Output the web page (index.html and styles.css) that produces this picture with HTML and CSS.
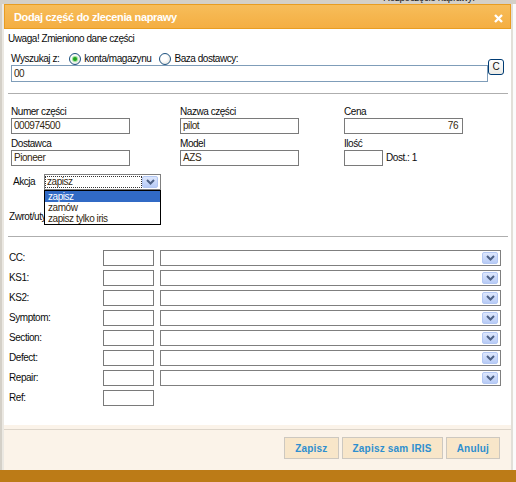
FILE: index.html
```html
<!DOCTYPE html>
<html lang="pl">
<head>
<meta charset="utf-8">
<title>Dodaj część do zlecenia naprawy</title>
<link rel="stylesheet" href="styles.css">
</head>
<body>
<div class="page">
  <div class="page-top"><span class="page-top-text">Rozpoczęcie naprawy:</span></div>
  <div class="page-fill"></div>
  <div class="page-bottom"></div>

  <div class="dialog">
    <div class="titlebar">
      <span class="title">Dodaj część do zlecenia naprawy</span>
      <svg class="close" width="9" height="9" viewBox="0 0 9 9"><path d="M1 1L8 8M8 1L1 8" stroke="#fff" stroke-width="2.4"/></svg>
    </div>

    <div class="body">
      <div class="notice">Uwaga! Zmieniono dane części</div>

      <div class="search">
        <div class="search-main">
          <div class="search-opts">
            <span>Wyszukaj z:</span>
            <span class="radio checked first"></span><span>konta/magazynu</span>
            <span class="radio second"></span><span>Baza dostawcy:</span>
          </div>
          <div class="field search-input">00</div>
        </div>
        <div class="cbtn">C</div>
      </div>

      <div class="rule"></div>

      <div class="grid">
        <div class="cell"><div class="lbl">Numer części</div><div class="field">000974500</div></div>
        <div class="cell"><div class="lbl">Nazwa części</div><div class="field">pilot</div></div>
        <div class="cell"><div class="lbl">Cena</div><div class="field num">76</div></div>
        <div class="cell"><div class="lbl">Dostawca</div><div class="field">Pioneer</div></div>
        <div class="cell"><div class="lbl">Model</div><div class="field">AZS</div></div>
        <div class="cell"><div class="lbl">Ilość</div><div class="qty-wrap"><div class="field qty"></div><span>Dost.: 1</span></div></div>
      </div>

      <div class="akcja-row">
        <span class="akcja-lbl">Akcja</span>
        <div class="select akcja">
          <span class="val focus">zapisz</span>
          <span class="arrow"><svg width="9" height="6" viewBox="0 0 9 6"><path d="M1 1L4.5 4.5L8 1" fill="none" stroke="#4d6185" stroke-width="2"/></svg></span>
          <div class="droplist">
            <div class="opt sel">zapisz</div>
            <div class="opt">zamów</div>
            <div class="opt">zapisz tylko iris</div>
          </div>
        </div>
      </div>

      <div class="zwrot-row"><span class="zwrot-lbl">Zwrot/utylizacja:</span></div>

      <div class="rule rule2"></div>

      <div class="codes">
        <div class="code-row"><span class="code-lbl">CC:</span><div class="field small"></div><div class="select wide"><span class="val"></span><span class="arrow"><svg width="9" height="6" viewBox="0 0 9 6"><path d="M1 1L4.5 4.5L8 1" fill="none" stroke="#4d6185" stroke-width="2"/></svg></span></div></div>
        <div class="code-row"><span class="code-lbl">KS1:</span><div class="field small"></div><div class="select wide"><span class="val"></span><span class="arrow"><svg width="9" height="6" viewBox="0 0 9 6"><path d="M1 1L4.5 4.5L8 1" fill="none" stroke="#4d6185" stroke-width="2"/></svg></span></div></div>
        <div class="code-row"><span class="code-lbl">KS2:</span><div class="field small"></div><div class="select wide"><span class="val"></span><span class="arrow"><svg width="9" height="6" viewBox="0 0 9 6"><path d="M1 1L4.5 4.5L8 1" fill="none" stroke="#4d6185" stroke-width="2"/></svg></span></div></div>
        <div class="code-row"><span class="code-lbl">Symptom:</span><div class="field small"></div><div class="select wide"><span class="val"></span><span class="arrow"><svg width="9" height="6" viewBox="0 0 9 6"><path d="M1 1L4.5 4.5L8 1" fill="none" stroke="#4d6185" stroke-width="2"/></svg></span></div></div>
        <div class="code-row"><span class="code-lbl">Section:</span><div class="field small"></div><div class="select wide"><span class="val"></span><span class="arrow"><svg width="9" height="6" viewBox="0 0 9 6"><path d="M1 1L4.5 4.5L8 1" fill="none" stroke="#4d6185" stroke-width="2"/></svg></span></div></div>
        <div class="code-row"><span class="code-lbl">Defect:</span><div class="field small"></div><div class="select wide"><span class="val"></span><span class="arrow"><svg width="9" height="6" viewBox="0 0 9 6"><path d="M1 1L4.5 4.5L8 1" fill="none" stroke="#4d6185" stroke-width="2"/></svg></span></div></div>
        <div class="code-row"><span class="code-lbl">Repair:</span><div class="field small"></div><div class="select wide"><span class="val"></span><span class="arrow"><svg width="9" height="6" viewBox="0 0 9 6"><path d="M1 1L4.5 4.5L8 1" fill="none" stroke="#4d6185" stroke-width="2"/></svg></span></div></div>
        <div class="code-row"><span class="code-lbl">Ref:</span><div class="field small"></div></div>
      </div>
    </div>

    <div class="footer">
      <div class="footer-line"></div>
      <div class="buttons">
        <button class="btn">Zapisz</button>
        <button class="btn">Zapisz sam IRIS</button>
        <button class="btn">Anuluj</button>
      </div>
    </div>
  </div>
</div>
</body>
</html>
```

FILE: styles.css
```css
* { box-sizing: border-box; margin: 0; padding: 0; }
html, body { width: 516px; height: 482px; overflow: hidden; }
body {
  font-family: "Liberation Sans", Arial, sans-serif;
  font-size: 10px;
  line-height: 12px;
  letter-spacing: -0.45px;
  color: #0c0c0c;
  background: #d4d0c8;
}

.page {
  position: relative;
  width: 516px;
  height: 482px;
  display: flex;
  flex-direction: column;
  background: #d4d0c8;
}
.page-top { height: 4px; flex: none; padding-left: 383px; }
.page-top-text { display: block; margin-top: -8px; color: #222; white-space: nowrap; }
.page-fill {
  flex: 1;
  background: linear-gradient(to right, #d4d0c8 0 2px, #ebe8e2 2px 4px, #d4d0c8 4px 511px, #e2dfd8 511px 513px, #fbfbfb 513px);
}
.page-bottom { height: 12px; flex: none; background: #bc7b17; }

.dialog {
  position: absolute;
  left: 4px;
  top: 4px;
  width: 507px;
  height: 466px;
  background: #fff;
  display: flex;
  flex-direction: column;
}

.titlebar {
  height: 25px;
  flex: none;
  display: flex;
  align-items: center;
  justify-content: space-between;
  padding: 0 7px 0 9px;
  background: linear-gradient(#f7bd5a, #f4ae42);
  border: 1px solid #e89d22;
}
.title { color: #fff; font-weight: bold; font-size: 11px; letter-spacing: -0.35px; }
.close { margin-top: 4px; }

.body { flex: 1; padding: 4px 3px 0 4px; }
.notice { height: 12px; }

.search { display: flex; margin: 8px 0 0 3px; }
.search-main { width: 477px; }
.search-opts { display: flex; align-items: center; height: 12px; }
.radio {
  position: relative;
  width: 12px;
  height: 12px;
  border-radius: 50%;
  border: 1px solid #1c5180;
  background: radial-gradient(circle at 40% 40%, #ffffff 35%, #dcdad2 100%);
  margin-right: 3px;
}
.radio.first { margin-left: 10px; }
.radio.second { margin-left: 8px; }
.radio.checked::after {
  content: "";
  position: absolute;
  left: 3px;
  top: 3px;
  width: 4px;
  height: 4px;
  border-radius: 50%;
  background: #1fa31f;
  box-shadow: 0 0 1px 1px #8fdc8f;
}
.cbtn {
  width: 16px;
  height: 16px;
  margin-top: 6px;
  border: 1px solid #003c74;
  border-radius: 3px;
  background: linear-gradient(#ffffff, #ecebe6);
  text-align: center;
  line-height: 14px;
  color: #111;
  letter-spacing: 0;
}

.field {
  width: 119px;
  height: 16px;
  border: 1px solid #7a7a7a;
  padding: 0 2px;
  line-height: 14px;
  color: #33270f;
  background: #fff;
}
.search-input { width: 477px; height: 17px; border-color: #7f9db9; line-height: 15px; }
.field.num { text-align: right; padding-right: 4px; }
.field.qty { width: 39px; }
.qty-wrap { display: flex; align-items: center; gap: 3px; }

.rule { height: 1px; background: #aeaeae; margin-top: 11px; }
.rule2 { margin-top: 13px; }

.grid {
  display: grid;
  grid-template-columns: 169px 164px 1fr;
  row-gap: 4px;
  margin: 12px 0 0 3px;
}
.lbl { height: 12px; }

.akcja-row { display: flex; align-items: center; margin: 8px 0 0 5px; height: 16px; }
.akcja-lbl { width: 31px; }

.select {
  position: relative;
  height: 16px;
  border: 1px solid #7f7f7f;
  display: flex;
  align-items: center;
  padding-right: 2px;
  background: #fff;
}
.select.akcja { width: 117px; }
.select.wide { width: 341px; margin-left: 6px; }
.val { flex: 1; height: 12px; line-height: 12px; padding-left: 2px; color: #33270f; }
.val.focus { outline: 1px dotted #333; outline-offset: -1px; }
.arrow {
  width: 16px;
  height: 12px;
  display: flex;
  align-items: center;
  justify-content: center;
  border: 1px solid #b3c7f2;
  border-radius: 2px;
  background: linear-gradient(#dde7fd, #b7cbf6);
}

.droplist {
  position: absolute;
  left: -1px;
  top: 15px;
  width: 117px;
  border: 1px solid #000;
  background: #fff;
  z-index: 2;
}
.opt { height: 11px; line-height: 11px; padding-left: 3px; color: #33270f; }
.opt.sel { background: #316ac5; color: #fff; }

.zwrot-row { height: 12px; margin: 21px 0 0 1px; display: flex; }
.zwrot-lbl { display: block; width: 35px; overflow: hidden; white-space: nowrap; }

.codes { display: flex; flex-direction: column; gap: 4px; margin-top: 13px; }
.code-row { display: flex; align-items: center; height: 16px; }
.code-lbl { width: 94px; margin-left: 1px; }
.field.small { width: 51px; }

.footer { height: 45px; flex: none; background: #fbf3e9; padding-top: 4px; }
.footer-line { height: 1px; background: #ddd5ca; }
.buttons { display: flex; justify-content: flex-end; gap: 3px; margin-top: 7px; padding-right: 11px; }
.btn {
  height: 22px;
  padding: 0 10px;
  border: 1px solid #cdc8c0;
  background: #f8e6c9;
  color: #2e8fcf;
  font-family: "Liberation Sans", Arial, sans-serif;
  font-size: 10px;
  font-weight: bold;
  letter-spacing: 0.2px;
}
```
